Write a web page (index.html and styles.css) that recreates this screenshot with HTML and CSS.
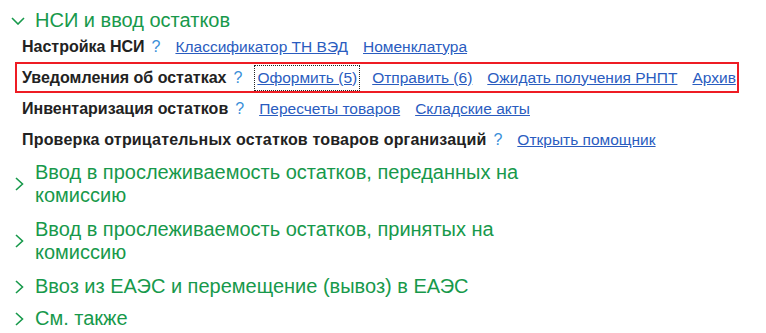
FILE: index.html
```html
<!DOCTYPE html>
<html lang="ru">
<head>
<meta charset="utf-8">
<link rel="stylesheet" href="styles.css">
</head>
<body>
<div class="page">
  <div class="group group-open">
    <div class="group-head">
      <svg class="chev chev-down" width="14" height="8" viewBox="0 0 14 8"><path d="M1 1 L7 7 L13 1" fill="none" stroke="#17994b" stroke-width="1.6"/></svg>
      <span class="group-title">НСИ и ввод остатков</span>
    </div>
    <div class="row">
      <span class="label">Настройка НСИ</span><span class="q">?</span>
      <a class="link">Классификатор ТН ВЭД</a><a class="link">Номенклатура</a>
    </div>
    <div class="row row-sel">
      <span class="label">Уведомления об остатках</span><span class="q">?</span>
      <a class="link focus">Оформить (5)</a><a class="link">Отправить (6)</a><a class="link">Ожидать получения РНПТ</a><a class="link">Архив</a>
    </div>
    <div class="row">
      <span class="label">Инвентаризация остатков</span><span class="q">?</span>
      <a class="link">Пересчеты товаров</a><a class="link">Складские акты</a>
    </div>
    <div class="row">
      <span class="label label-wide">Проверка отрицательных остатков товаров организаций</span><span class="q">?</span>
      <a class="link">Открыть помощник</a>
    </div>
  </div>
  <div class="group">
    <div class="group-head">
      <svg class="chev" width="9" height="14" viewBox="0 0 9 14"><path d="M1 1 L7.5 7 L1 13" fill="none" stroke="#17994b" stroke-width="1.6"/></svg>
      <span class="group-title">Ввод в прослеживаемость остатков, переданных на комиссию</span>
    </div>
  </div>
  <div class="group">
    <div class="group-head">
      <svg class="chev" width="9" height="14" viewBox="0 0 9 14"><path d="M1 1 L7.5 7 L1 13" fill="none" stroke="#17994b" stroke-width="1.6"/></svg>
      <span class="group-title">Ввод в прослеживаемость остатков, принятых на комиссию</span>
    </div>
  </div>
  <div class="group">
    <div class="group-head">
      <svg class="chev" width="9" height="14" viewBox="0 0 9 14"><path d="M1 1 L7.5 7 L1 13" fill="none" stroke="#17994b" stroke-width="1.6"/></svg>
      <span class="group-title">Ввоз из ЕАЭС и перемещение (вывоз) в ЕАЭС</span>
    </div>
  </div>
  <div class="group group-last">
    <div class="group-head">
      <svg class="chev" width="9" height="14" viewBox="0 0 9 14"><path d="M1 1 L7.5 7 L1 13" fill="none" stroke="#17994b" stroke-width="1.6"/></svg>
      <span class="group-title">См. также</span>
    </div>
  </div>
</div>
</body>
</html>
```
FILE: styles.css
```css
html, body {
  margin: 0;
  padding: 0;
  background: #fff;
}
body {
  font-family: "Liberation Sans", Arial, sans-serif;
  width: 766px;
  height: 333px;
  overflow: hidden;
}
.page {
  padding: 9px 0 0 0;
}
.group-head {
  display: flex;
  align-items: center;
}
.chev {
  flex: none;
  margin-left: 15px;
  margin-right: 11px;
}
.chev-down {
  margin-left: 11px;
  margin-right: 10px;
  margin-top: 1px;
}
.group-title {
  color: #17994b;
  font-size: 20px;
  line-height: 23px;
  width: 505px;
}
.group-open .group-head {
  margin-bottom: -1px;
}
.row {
  box-sizing: border-box;
  display: flex;
  align-items: center;
  height: 31px;
  margin-left: 15px;
  width: 724px;
  padding-left: 5px;
  border: 2px solid transparent;
  white-space: nowrap;
  overflow: hidden;
  font-size: 16px;
  line-height: 22px;
}
.row-sel {
  border-color: #ee1c24;
}
.label {
  font-weight: bold;
  color: #222;
}
.label-wide {
  letter-spacing: 0.18px;
}
.q {
  color: #3a8fd9;
  margin: 0 13px 0 7px;
}
.link {
  flex: none;
  color: #2a5cbf;
  font-size: 15.5px;
  text-decoration: underline;
  margin-right: 11px;
  padding: 1px 2px;
}
.focus {
  outline: 1px dotted #222;
  outline-offset: 0;
}
.group-open {
  margin-bottom: 6px;
}
.group + .group {
  margin-top: 11px;
}
.group-open + .group {
  margin-top: 0;
}
.group + .group-last {
  margin-top: 9px;
}
```
